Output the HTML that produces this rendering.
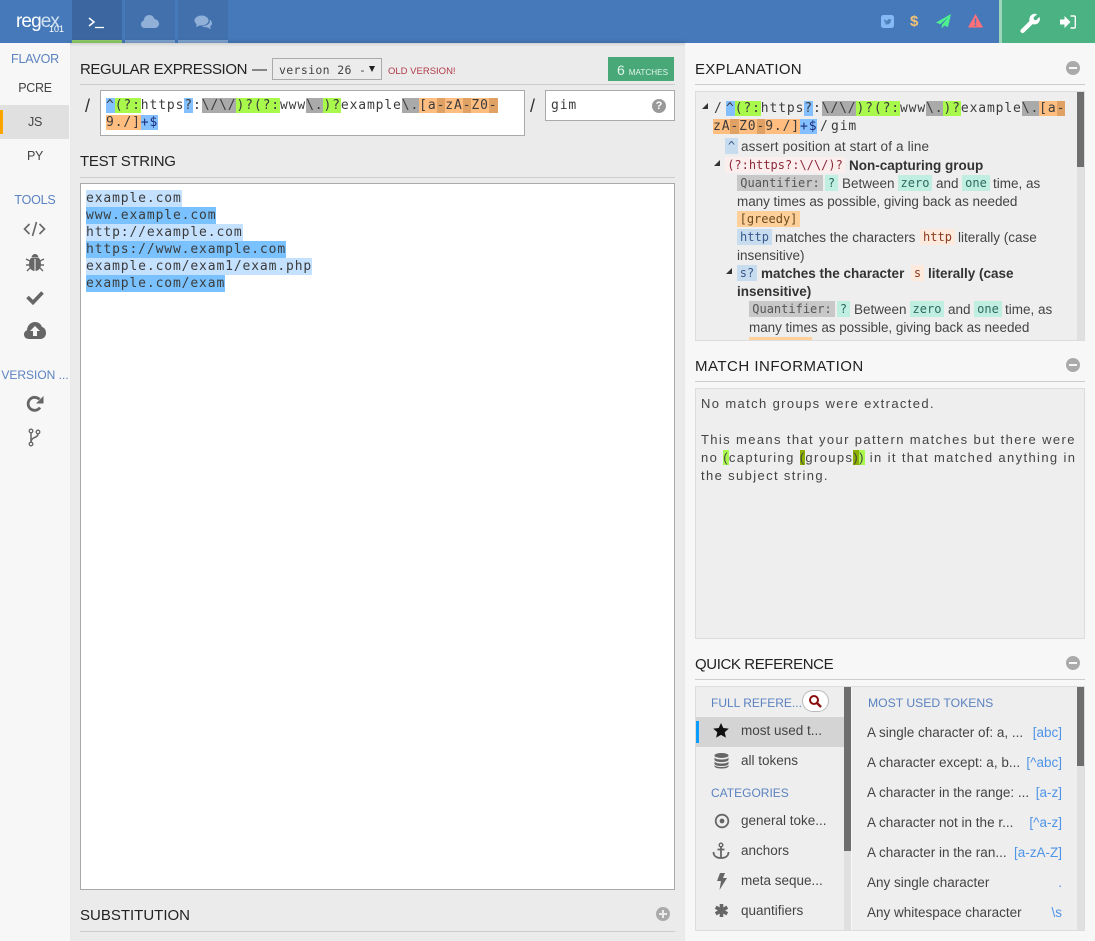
<!DOCTYPE html>
<html><head><meta charset="utf-8"><title>regex101</title>
<style>
html,body{margin:0;padding:0}
body{width:1095px;height:941px;overflow:hidden;position:relative;background:#f7f7f7;font-family:"Liberation Sans",sans-serif;font-size:13.5px;color:#444}
.a{position:absolute}
.t{position:absolute;white-space:pre;line-height:18px;height:18px;margin-top:1px}
.m{font-family:"DejaVu Sans Mono","Liberation Mono",monospace;font-size:13px;letter-spacing:.87px;color:#3c3c3c}
.s{font-family:"DejaVu Sans Mono","Liberation Mono",monospace;font-size:12px;letter-spacing:.1px}
.ch{position:absolute;white-space:pre;height:16px;line-height:16px;margin-top:1px;text-align:center;font-family:"DejaVu Sans Mono","Liberation Mono",monospace;font-size:12px}
.h{font-size:15px;color:#222;line-height:20px;height:20px}
.nav{font-size:12.5px;letter-spacing:-.2px;color:#5b82c0;text-align:center;width:70px;left:0}
.fl{font-size:12.5px;letter-spacing:-.3px;color:#444;text-align:center;width:70px;left:0;margin-top:0}
.ln{position:absolute;height:1px;background:#ccc}
.b{background:#84bfff}.g{background:#a9f94d}.y{background:#aaa}.o{background:#ffbd80}.d{background:#e0a264}
.k{background:#c8dcf0;color:#38598a}.q{background:#c8c8c8;color:#555}.c{background:#c0efe2;color:#2c6a5c}.r{background:#ffd09a;color:#6a4a20}.l{background:#fdeadc;color:#8a3a20}
.i{position:absolute;overflow:visible}
.blue{color:#5b82c0;font-size:12.2px}
.cr{position:absolute;left:867px;white-space:pre;line-height:18px;margin-top:1px}
.tk{position:absolute;right:33px;color:#4e94e8;line-height:18px;white-space:pre;margin-top:1px}
.n0{margin-top:0}
.bd{font-weight:bold;color:#333}
.mi{letter-spacing:1.37px;font-size:13px}
</style></head><body>

<!-- header -->
<div class="a" style="left:0;top:0;width:1095px;height:43px;background:#4679b9"></div>
<div class="t" style="left:16px;top:9px;font-size:19px;line-height:24px;height:24px;color:#fff;letter-spacing:-.9px">reg<span style="color:#cfe0f3">ex</span></div>
<div class="t" style="left:49px;top:22px;font-size:9px;line-height:12px;color:#fff;letter-spacing:0">101</div>
<div class="a" style="left:72px;top:0;width:50px;height:40px;background:#3c669f"></div>
<div class="a" style="left:72px;top:40px;width:50px;height:3px;background:#8fcb67"></div>
<div class="a" style="left:125px;top:0;width:50px;height:40px;background:#4170ad"></div>
<div class="a" style="left:125px;top:40px;width:50px;height:3px;background:#7fa3cf"></div>
<div class="a" style="left:178px;top:0;width:50px;height:40px;background:#4170ad"></div>
<div class="a" style="left:178px;top:40px;width:50px;height:3px;background:#7fa3cf"></div>
<svg class="i" style="left:88px;top:16px" width="18" height="14" viewBox="0 0 18 14"><path d="M1 2l5 4-5 4" fill="none" stroke="#fff" stroke-width="1.5"/><path d="M7 11.500h9" stroke="#fff" stroke-width="1.300"/></svg>
<svg class="i" style="left:141px;top:14px" width="18" height="14" viewBox="0 0 18 14"><path d="M4 14C1.500 14 0 12.200 0 10.200 0 8.300 1.200 7 2.700 6.600 3 3 5.500 1 8.200 1 10.800 1 12.800 2.700 13.400 5 16 5.200 18 7.200 18 9.700 18 12.200 16 14 13.500 14z" fill="#90b0d8"/></svg>
<svg class="i" style="left:194px;top:15px" width="18" height="15" viewBox="0 0 18 15"><ellipse cx="7.500" cy="5.500" rx="7" ry="5" fill="#90b0d8"/><path d="M3 8l-1 4 5-2z" fill="#90b0d8"/><path d="M15.500 4.500C17 5.500 18 6.800 18 8.200c0 1.500-1 2.700-2 3.300l1 2.800-4-2c-2 .2-3.500-.3-5-1.300 4.500 0 9-2.300 7.500-6.500z" fill="#90b0d8"/></svg>

<svg class="i" style="left:881px;top:15px" width="13" height="13" viewBox="0 0 13 13"><rect width="13" height="13" rx="2.500" fill="#85b9f5"/><path d="M3 4.500c1.300.8 2.500 1.200 3.500 1.200C6.500 4 8.500 3.500 9.500 4.500l1-.3-.5 1c0 2.500-2 4.300-4 4.300-1 0-2-.3-2.800-.8 1 0 1.500-.2 2-.6C4 7.800 3 6.300 3 4.500z" fill="#4e80bc"/></svg>
<div class="t" style="left:910px;top:12px;font-size:15px;font-weight:bold;color:#f2c374">$</div>
<svg class="i" style="left:936px;top:14px" width="15" height="15" viewBox="0 0 15 15"><path d="M15 0L0 8.500l4.200 1.800L12 3.500 5.800 11v3.500l2.500-3 3.700 1.500z" fill="#4cf08e"/></svg>
<svg class="i" style="left:968px;top:14px" width="15" height="14" viewBox="0 0 15 14"><path d="M7.500 0l7.500 13.500H0z" fill="#ff6f78"/><path d="M6.700 4.500h1.600l-.2 5H6.900zM6.700 10.500h1.600v1.600H6.700z" fill="#4679b9"/></svg>

<div class="a" style="left:1000px;top:0;width:95px;height:43px;background:#4bb283"></div>
<div class="a" style="left:999px;top:0;width:3px;height:43px;background:#9ed4ba"></div>
<svg class="i" style="left:1020px;top:13px" width="20" height="20" viewBox="0 0 20 20"><path d="M1 16.500L9.500 8C8.600 4.500 11 0.800 15 0.800c.8 0 1.500.1 2 .4L13.500 4.500l.5 2.200 2.200.5 3.200-3.300c.3.700.5 1.400.5 2.200 0 3.800-3.800 6.200-7.300 5L4 19.500c-.8.800-2 .8-2.800 0L1 19.300c-.8-.8-.8-2 0-2.800z" fill="#fff"/></svg>
<svg class="i" style="left:1060px;top:15px" width="16" height="14" viewBox="0 0 16 14"><path d="M0 4.500h4.500V1L10.500 7l-6 6V9.500H0z" fill="#fff"/><path d="M10.500 1H14c.8 0 1.300.5 1.300 1.300v9.400c0 .8-.5 1.300-1.300 1.300h-3.500" fill="none" stroke="#fff" stroke-width="1.400"/></svg>

<!-- main panel -->
<div class="a" style="left:70px;top:43px;width:615px;height:898px;background:#ebebeb;box-shadow:0 0 5px rgba(0,0,0,.2),inset 0 3px 3px -2px rgba(0,0,0,.15)"></div>
<div class="a" style="left:0;top:43px;width:70px;height:898px;background:#f7f7f7"></div>
<div class="a" style="left:685px;top:43px;width:410px;height:898px;background:#f7f7f7"></div>

<!-- sidebar -->
<div class="t nav" style="top:49px">FLAVOR</div>
<div class="t fl" style="top:79px">PCRE</div>
<div class="a" style="left:0;top:105px;width:69px;height:34px;background:#e0e0e0"></div>
<div class="a" style="left:0;top:110px;width:3px;height:24px;background:#ffa500"></div>
<div class="t fl" style="top:113px">JS</div>
<div class="t fl" style="top:147px">PY</div>
<div class="t nav" style="top:190px">TOOLS</div>
<svg class="i" style="left:23px;top:221px" width="23" height="16" viewBox="0 0 23 16"><path d="M6.500 3L1.500 8l5 5M16.500 3l5 5-5 5M13.500 1L9.500 15" fill="none" stroke="#666" stroke-width="1.600"/></svg>
<svg class="i" style="left:26px;top:253px" width="18" height="19" viewBox="0 0 18 19"><path d="M5 5h8c1.500 2 2 4 2 7 0 3-2.500 6-6 6s-6-3-6-6c0-3 .5-5 2-7zM5.500 4.500C6 2 7.500 1 9 1s3 1 3.500 3.500z" fill="#666"/><path d="M0 6l4 2M18 6l-4 2M0 12h3M18 12h-3M1 18l3-3M17 18l-3-3M9 6v12" stroke="#666" stroke-width="1.400" fill="none"/><path d="M9 6v13" stroke="#f7f7f7" stroke-width="1"/></svg>
<svg class="i" style="left:26px;top:290px" width="18" height="14" viewBox="0 0 18 14"><path d="M1.500 7l5.500 5.500L16.500 2.500" fill="none" stroke="#666" stroke-width="3.600"/></svg>
<svg class="i" style="left:24px;top:322px" width="22" height="17" viewBox="0 0 22 17"><path d="M5 17C2 17 0 15 0 12.500 0 10.500 1.200 9 3 8.300 3 4 6.500 0 11 0c3.500 0 6 2 7 5 2.500.5 4 3 4 6 0 3.500-2.500 6-5.500 6z" fill="#666"/><path d="M11 4l5 5h-3v5H9V9H6z" fill="#f7f7f7"/></svg>
<div class="t nav" style="top:365px;font-size:12px;letter-spacing:0">VERSION ...</div>
<svg class="i" style="left:26px;top:395px" width="18" height="18" viewBox="0 0 18 18"><path d="M14 12.500A6.500 6.500 0 1 1 13.500 4.500" fill="none" stroke="#666" stroke-width="2.800"/><path d="M17.500 1v7.500H10z" fill="#666"/></svg>
<svg class="i" style="left:28px;top:428px" width="13" height="19" viewBox="0 0 13 19"><circle cx="3" cy="3" r="1.800" fill="none" stroke="#666" stroke-width="1.300"/><circle cx="3" cy="16" r="1.800" fill="none" stroke="#666" stroke-width="1.300"/><circle cx="10" cy="4" r="1.800" fill="none" stroke="#666" stroke-width="1.300"/><path d="M3 5v9M10 6c0 4-7 3-7 8" fill="none" stroke="#666" stroke-width="1.500"/></svg>

<!-- regular expression -->
<div class="t h" style="left:80px;top:59px;letter-spacing:-.4px">REGULAR EXPRESSION</div>
<div class="t h" style="left:252px;top:59px">—</div>
<div class="a" style="left:272px;top:58px;width:108px;height:20px;border:1px solid #aaa;background:#ececec;box-sizing:content-box"></div>
<div class="t m" style="left:279px;top:60px;font-size:11.500px;letter-spacing:.35px;color:#444">version 26 -</div>
<div class="a" style="left:369px;top:66px;border-left:3.500px solid transparent;border-right:3.500px solid transparent;border-top:6px solid #222"></div>
<div class="t" style="left:388px;top:62px;font-size:9.500px;color:#b23a4a">OLD VERSION!</div>
<div class="a" style="left:608px;top:57px;width:66px;height:24px;background:#48a878"></div>
<div class="t" style="left:617px;top:60px;color:#dff4ea;font-size:14px">6 <span style="font-size:8.200px">MATCHES</span></div>
<div class="ln" style="left:80px;top:84px;width:595px"></div>

<div class="t" style="left:85px;top:96px;font-size:18px;color:#333">/</div>
<div class="a" style="left:100px;top:90px;width:425px;height:46px;box-sizing:border-box;border:1px solid #aaa;background:#fff"></div>
<div class="t m" style="left:106px;top:96px"><span class="b">^</span><span class="g">(?:</span>https<span class="b">?</span>:<span class="y">\/\/</span><span class="g">)?(?:</span>www<span class="y">\.</span><span class="g">)?</span>example<span class="y">\.</span><span class="o">[a</span><span class="d">-</span><span class="o">zA</span><span class="d">-</span><span class="o">Z0</span><span class="d">-</span></div>
<div class="t m" style="left:106px;top:113px"><span class="o">9./]</span><span class="b" style="color:#1a2f7a">+$</span></div>
<div class="t" style="left:530px;top:96px;font-size:18px;color:#333">/</div>
<div class="a" style="left:545px;top:90px;width:130px;height:31px;box-sizing:border-box;border:1px solid #aaa;background:#fff"></div>
<div class="t m" style="left:551px;top:96px">gim</div>
<div class="a" style="left:652px;top:99px;width:14px;height:14px;border-radius:7px;background:#999;color:#fff;font-size:11px;font-weight:bold;line-height:14px;text-align:center">?</div>

<!-- test string -->
<div class="t h" style="left:80px;top:151px;letter-spacing:-.3px">TEST STRING</div>
<div class="ln" style="left:80px;top:177px;width:595px"></div>
<div class="a" style="left:80px;top:183px;width:595px;height:707px;box-sizing:border-box;border:1px solid #aaa;background:#fff"></div>
<div class="t m" style="left:86px;top:189px;height:17px;line-height:17px;background:#c4e1ff">example.com</div>
<div class="t m" style="left:86px;top:206px;height:17px;line-height:17px;background:#79c2ff">www.example.com</div>
<div class="t m" style="left:86px;top:223px;height:17px;line-height:17px;background:#c4e1ff">http://example.com</div>
<div class="t m" style="left:86px;top:240px;height:17px;line-height:17px;background:#79c2ff">https://www.example.com</div>
<div class="t m" style="left:86px;top:257px;height:17px;line-height:17px;background:#c4e1ff">example.com/exam1/exam.php</div>
<div class="t m" style="left:86px;top:274px;height:17px;line-height:17px;background:#79c2ff">example.com/exam</div>

<!-- substitution -->
<div class="t h" style="left:80px;top:905px">SUBSTITUTION</div>
<div class="a" style="left:656px;top:907px;width:14px;height:14px;border-radius:7px;background:#aaa"></div>
<div class="a" style="left:659px;top:913px;width:8px;height:2px;background:#ebebeb"></div>
<div class="a" style="left:662px;top:910px;width:2px;height:8px;background:#ebebeb"></div>
<div class="ln" style="left:80px;top:931px;width:595px"></div>

<!-- explanation -->
<div class="t h" style="left:695px;top:59px;letter-spacing:.27px">EXPLANATION</div>
<div class="a" style="left:1066px;top:61px;width:14px;height:14px;border-radius:7px;background:#aaa"></div>
<div class="a" style="left:1069px;top:67px;width:8px;height:2px;background:#f7f7f7"></div>
<div class="ln" style="left:695px;top:84px;width:390px"></div>
<div class="a" style="left:695px;top:91px;width:390px;height:250px;box-sizing:border-box;border:1px solid #ddd;background:#eee;overflow:hidden">
 <div class="a" style="left:381px;top:0;width:8px;height:248px;background:#e0e0e0"></div>
 <div class="a" style="left:381px;top:0;width:7px;height:75px;background:#6e6e6e"></div>
 <div class="a" style="left:6px;top:11px;border-left:6px solid transparent;border-bottom:6px solid #333"></div>
 <div class="t m" style="left:18px;top:7px;letter-spacing:0">/</div>
 <div class="t m" style="left:30px;top:7px"><span class="b">^</span><span class="g">(?:</span>https<span class="b">?</span>:<span class="y">\/\/</span><span class="g">)?(?:</span>www<span class="y">\.</span><span class="g">)?</span>example<span class="y">\.</span><span class="o">[a</span><span class="d">-</span></div>
 <div class="t m" style="left:17px;top:25px"><span class="o">zA</span><span class="d">-</span><span class="o">Z0</span><span class="d">-</span><span class="o">9./]</span><span class="b" style="color:#1a2f7a">+$</span></div>
 <div class="t m" style="left:124px;top:25px;letter-spacing:0">/</div>
 <div class="t m" style="left:135px;top:25px">gim</div>

 <div class="ch k" style="left:29px;top:45px;width:13px">^</div>
 <div class="t" style="left:45px;top:45px;letter-spacing:.15px">assert position at start of a line</div>

 <div class="a" style="left:18px;top:68px;border-left:6px solid transparent;border-bottom:6px solid #333"></div>
 <div class="ch" style="left:29px;top:64px;width:120px;background:#fdeeee;color:#8a2a3a">(?:https?:\/\/)?</div>
 <div class="t bd" style="left:153px;top:64px">Non-capturing group</div>

 <div class="ch q" style="left:41px;top:82px;width:86px">Quantifier:</div>
 <div class="ch c" style="left:129px;top:82px;width:13px">?</div>
 <div class="t" style="left:146px;top:82px">Between</div>
 <div class="ch c" style="left:202px;top:82px;width:34px">zero</div>
 <div class="t" style="left:240px;top:82px">and</div>
 <div class="ch c" style="left:266px;top:82px;width:28px">one</div>
 <div class="t" style="left:297px;top:82px">time, as</div>
 <div class="t" style="left:41px;top:100px;letter-spacing:-.04px">many times as possible, giving back as needed</div>
 <div class="ch r" style="left:41px;top:118px;width:63px">[greedy]</div>
 <div class="ch k" style="left:41px;top:136px;width:35px">http</div>
 <div class="t" style="left:79px;top:136px">matches the characters</div>
 <div class="ch l" style="left:224px;top:136px;width:35px">http</div>
 <div class="t" style="left:262px;top:136px">literally (case</div>
 <div class="t" style="left:41px;top:154px">insensitive)</div>

 <div class="a" style="left:30px;top:176px;border-left:6px solid transparent;border-bottom:6px solid #333"></div>
 <div class="ch k" style="left:41px;top:172px;width:20px">s?</div>
 <div class="t bd" style="left:65px;top:172px">matches the character</div>
 <div class="ch l" style="left:215px;top:172px;width:13px">s</div>
 <div class="t bd" style="left:232px;top:172px">literally (case</div>
 <div class="t bd" style="left:41px;top:190px">insensitive)</div>

 <div class="ch q" style="left:53px;top:208px;width:86px">Quantifier:</div>
 <div class="ch c" style="left:141px;top:208px;width:13px">?</div>
 <div class="t" style="left:158px;top:208px">Between</div>
 <div class="ch c" style="left:214px;top:208px;width:34px">zero</div>
 <div class="t" style="left:252px;top:208px">and</div>
 <div class="ch c" style="left:278px;top:208px;width:28px">one</div>
 <div class="t" style="left:309px;top:208px">time, as</div>
 <div class="t" style="left:53px;top:226px;letter-spacing:-.04px">many times as possible, giving back as needed</div>
 <div class="a" style="left:53px;top:245px;width:63px;height:6px;background:#ffd09a"></div>
</div>

<!-- match info -->
<div class="t h" style="left:695px;top:356px;letter-spacing:.5px">MATCH INFORMATION</div>
<div class="a" style="left:1066px;top:358px;width:14px;height:14px;border-radius:7px;background:#aaa"></div>
<div class="a" style="left:1069px;top:364px;width:8px;height:2px;background:#f7f7f7"></div>
<div class="ln" style="left:695px;top:381px;width:390px"></div>
<div class="a" style="left:695px;top:388px;width:390px;height:251px;box-sizing:border-box;border:1px solid #ddd;background:#eee"></div>
<div class="t mi" style="left:701px;top:394px">No match groups were extracted.</div>
<div class="t mi" style="left:701px;top:430px">This means that your pattern matches but there were</div>
<div class="t mi" style="left:701px;top:448px">no <span style="background:#a9f94d">(</span>capturing <span style="background:#8db000">(</span>groups<span style="background:#8db000">)</span><span style="background:#a9f94d">)</span> in it that matched anything in</div>
<div class="t mi" style="left:701px;top:466px">the subject string.</div>

<!-- quick reference -->
<div class="t h" style="left:695px;top:654px;letter-spacing:-.4px">QUICK REFERENCE</div>
<div class="a" style="left:1066px;top:656px;width:14px;height:14px;border-radius:7px;background:#aaa"></div>
<div class="a" style="left:1069px;top:662px;width:8px;height:2px;background:#f7f7f7"></div>
<div class="ln" style="left:695px;top:679px;width:390px"></div>
<div class="a" style="left:695px;top:686px;width:390px;height:245px;box-sizing:border-box;border:1px solid #ddd;background:#eee"></div>
<div class="a" style="left:844px;top:687px;width:7px;height:243px;background:#e0e0e0"></div>
<div class="a" style="left:844px;top:687px;width:7px;height:164px;background:#6e6e6e"></div>
<div class="a" style="left:851px;top:687px;width:1px;height:243px;background:#f7f7f7"></div>
<div class="a" style="left:1077px;top:687px;width:7px;height:243px;background:#e0e0e0"></div>
<div class="a" style="left:1077px;top:687px;width:7px;height:79px;background:#6e6e6e"></div>

<div class="t blue" style="left:711px;top:693px;font-size:12px">FULL REFERE...</div>
<div class="a" style="left:802px;top:690px;width:25px;height:20px;border:1px solid #bbb;border-radius:11px;background:#fff"></div>
<svg class="i" style="left:808px;top:694px" width="14" height="14" viewBox="0 0 14 14"><circle cx="6" cy="6" r="4" fill="none" stroke="#8b1010" stroke-width="2"/><path d="M9 9l4 4" stroke="#8b1010" stroke-width="2.400"/></svg>
<div class="a" style="left:696px;top:717px;width:148px;height:30px;background:#d4d4d4"></div>
<div class="a" style="left:696px;top:721px;width:3px;height:22px;background:#0a9cff"></div>
<svg class="i" style="left:713px;top:723px" width="16" height="15" viewBox="0 0 16 15"><path d="M8 0l2.300 5 5.500.6-4.100 3.600 1.200 5.400L8 11.900l-4.900 2.700 1.200-5.400L.2 5.600 5.700 5z" fill="#111"/></svg>
<div class="t n0" style="left:741px;top:722px">most used t...</div>
<svg class="i" style="left:714px;top:753px" width="15" height="16" viewBox="0 0 15 16"><ellipse cx="7.500" cy="2.500" rx="7" ry="2.500" fill="#666"/><path d="M.5 4.500c1 1.500 3.500 2 7 2s6-.5 7-2v2.500c-1 1.500-3.500 2-7 2s-6-.5-7-2zM.5 8.500c1 1.500 3.500 2 7 2s6-.5 7-2v2.500c-1 1.500-3.500 2-7 2s-6-.5-7-2zM.5 12c1 1.500 3.500 2 7 2s6-.5 7-2v1.500c-1 1.500-3.500 2-7 2s-6-.5-7-2z" fill="#666"/></svg>
<div class="t n0" style="left:741px;top:752px">all tokens</div>
<div class="t blue" style="left:711px;top:783px;font-size:12px">CATEGORIES</div>
<svg class="i" style="left:714px;top:813px" width="16" height="16" viewBox="0 0 16 16"><circle cx="8" cy="8" r="6.300" fill="none" stroke="#666" stroke-width="1.800"/><circle cx="8" cy="8" r="2.400" fill="#666"/></svg>
<div class="t n0" style="left:741px;top:812px">general toke...</div>
<svg class="i" style="left:712px;top:842px" width="18" height="18" viewBox="0 0 18 18"><circle cx="9" cy="3" r="1.800" fill="none" stroke="#666" stroke-width="1.400"/><path d="M9 5v11M5.500 7.500h7M1.500 10c0 4 3 6 7.500 6s7.500-2 7.500-6" fill="none" stroke="#666" stroke-width="1.800"/></svg>
<svg class="i" style="left:717px;top:873px" width="10" height="17" viewBox="0 0 10 17"><path d="M3 0h5L6 5h4L2.500 17 4 8H0z" fill="#666"/></svg>
<div class="t n0" style="left:741px;top:842px">anchors</div>
<div class="t n0" style="left:741px;top:872px">meta seque...</div>
<svg class="i" style="left:714px;top:903px" width="15" height="15" viewBox="0 0 15 15"><path d="M7.500 1v13M1.700 4.200l11.600 6.600M13.300 4.200L1.700 10.800" stroke="#666" stroke-width="3.600"/></svg>
<div class="t n0" style="left:741px;top:902px">quantifiers</div>

<div class="t blue" style="left:868px;top:693px">MOST USED TOKENS</div>
<div class="cr" style="top:723px">A single character of: a, ...</div><div class="tk" style="top:723px">[abc]</div>
<div class="cr" style="top:753px">A character except: a, b...</div><div class="tk" style="top:753px">[^abc]</div>
<div class="cr" style="top:783px">A character in the range: ...</div><div class="tk" style="top:783px">[a-z]</div>
<div class="cr" style="top:813px">A character not in the r...</div><div class="tk" style="top:813px">[^a-z]</div>
<div class="cr" style="top:843px">A character in the ran...</div><div class="tk" style="top:843px">[a-zA-Z]</div>
<div class="cr" style="top:873px">Any single character</div><div class="tk" style="top:873px">.</div>
<div class="cr" style="top:903px">Any whitespace character</div><div class="tk" style="top:903px">\s</div>

</body></html>
